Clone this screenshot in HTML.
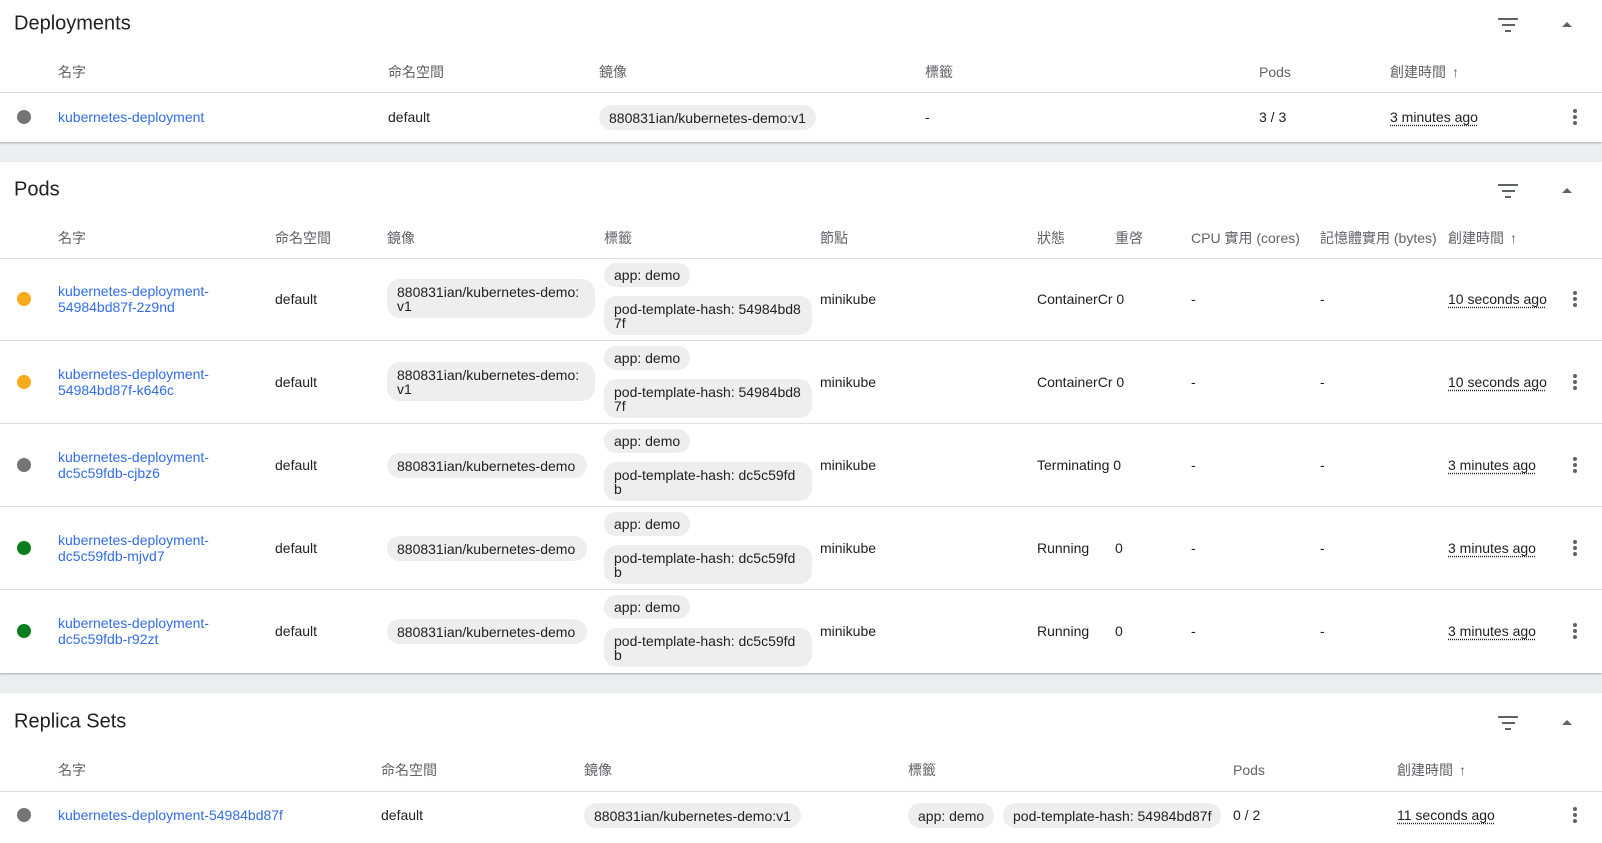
<!DOCTYPE html>
<html><head><meta charset="utf-8"><style>
*{box-sizing:border-box;margin:0;padding:0}
body{width:1602px;height:835px;overflow:hidden;background:#eceff1;font-family:"Liberation Sans","Noto Sans CJK TC",sans-serif;font-size:14px;color:#202124;position:relative}
.card{position:absolute;left:0;width:1602px;background:#fff;box-shadow:0 1px 2px rgba(0,0,0,.3)}
.a{position:absolute;white-space:nowrap}
.t{font-size:20px;left:14px}
.h{color:#5f6368;transform:translateY(-50%)}
.c{transform:translateY(-50%)}
.ln{position:absolute;left:0;width:1602px;height:1px;background:#e0e0e0}
.lk{color:#326de6;line-height:16px}
.chip{position:absolute;background:#eeeeee;border-radius:13px;padding:0 10px;line-height:14px;display:flex;align-items:center;white-space:normal;word-break:break-all}
.dot{position:absolute;left:17px;width:14px;height:14px;border-radius:50%;transform:translateY(-50%)}
.g{background:#757575}.o{background:#f9ab1f}.gr{background:#0a7e1e}
.tm{text-decoration:underline dotted;text-underline-offset:3px}
.keb{position:absolute;left:1573px;width:4px;transform:translateY(-50%)}
.keb i{display:block;width:4px;height:4px;border-radius:50%;background:#5f6368;margin:2px 0}
.flt{position:absolute;left:1498px}
.flt i{display:block;height:2px;background:#5f6368;margin:0 auto 4px}
.car{position:absolute;left:1562px;width:0;height:0;border-left:5px solid transparent;border-right:5px solid transparent;border-bottom:5px solid #5f6368}
.arr{font-size:14px;margin-left:6px;color:#5f6368;font-weight:bold}
</style></head><body>

<!-- Deployments -->
<div class="card" style="top:0;height:142px">
<div class="a t c" style="top:24px">Deployments</div>
<div class="flt" style="top:18px;width:20px"><i style="width:20px"></i><i style="width:13px"></i><i style="width:6px"></i></div>
<div class="car" style="top:22px"></div>
<div class="a h" style="left:58px;top:72px">名字</div>
<div class="a h" style="left:388px;top:72px">命名空間</div>
<div class="a h" style="left:599px;top:72px">鏡像</div>
<div class="a h" style="left:925px;top:72px">標籤</div>
<div class="a h" style="left:1259px;top:72px">Pods</div>
<div class="a h" style="left:1390px;top:72px">創建時間<span class="arr">↑</span></div>
<div class="ln" style="top:92px"></div>
<div class="dot g" style="top:117px"></div>
<div class="a c lk" style="left:58px;top:117px">kubernetes-deployment</div>
<div class="a c" style="left:388px;top:117px">default</div>
<div class="chip" style="left:599px;top:105px;height:25px">880831ian/kubernetes-demo:v1</div>
<div class="a c" style="left:925px;top:117px">-</div>
<div class="a c" style="left:1259px;top:117px">3 / 3</div>
<div class="a c tm" style="left:1390px;top:117px">3 minutes ago</div>
<div class="keb" style="top:117px"><i></i><i></i><i></i></div>
</div>

<!-- Pods -->
<div class="card" style="top:162px;height:511px">
<div class="a t c" style="top:28px">Pods</div>
<div class="flt" style="top:22px;width:20px"><i style="width:20px"></i><i style="width:13px"></i><i style="width:6px"></i></div>
<div class="car" style="top:26px"></div>
<div class="a h" style="left:58px;top:76px">名字</div>
<div class="a h" style="left:275px;top:76px">命名空間</div>
<div class="a h" style="left:387px;top:76px">鏡像</div>
<div class="a h" style="left:604px;top:76px">標籤</div>
<div class="a h" style="left:820px;top:76px">節點</div>
<div class="a h" style="left:1037px;top:76px">狀態</div>
<div class="a h" style="left:1115px;top:76px">重啓</div>
<div class="a h" style="left:1191px;top:76px">CPU 實用 (cores)</div>
<div class="a h" style="left:1320px;top:76px">記憶體實用 (bytes)</div>
<div class="a h" style="left:1448px;top:76px">創建時間<span class="arr">↑</span></div>
<div class="ln" style="top:96px"></div>

<!-- row template: top offsets 96,179,262,345,428 -->
<div style="position:absolute;left:0;top:96px;width:1602px;height:83px">
<div class="dot o" style="top:41px"></div>
<div class="a c lk" style="left:58px;top:41px">kubernetes-deployment-<br>54984bd87f-2z9nd</div>
<div class="a c" style="left:275px;top:41px">default</div>
<div class="chip" style="left:387px;top:21px;height:39px;width:208px">880831ian/kubernetes-demo:<br>v1</div>
<div class="chip" style="left:604px;top:5px;height:24px">app: demo</div>
<div class="chip" style="left:604px;top:38px;height:39px;width:208px">pod-template-hash: 54984bd8<br>7f</div>
<div class="a c" style="left:820px;top:41px">minikube</div>
<div class="a c" style="left:1037px;top:41px">ContainerCr 0</div>
<div class="a c" style="left:1191px;top:41px">-</div>
<div class="a c" style="left:1320px;top:41px">-</div>
<div class="a c tm" style="left:1448px;top:41px">10 seconds ago</div>
<div class="keb" style="top:41px"><i></i><i></i><i></i></div>
<div class="ln" style="top:82px"></div>
</div>

<div style="position:absolute;left:0;top:179px;width:1602px;height:83px">
<div class="dot o" style="top:41px"></div>
<div class="a c lk" style="left:58px;top:41px">kubernetes-deployment-<br>54984bd87f-k646c</div>
<div class="a c" style="left:275px;top:41px">default</div>
<div class="chip" style="left:387px;top:21px;height:39px;width:208px">880831ian/kubernetes-demo:<br>v1</div>
<div class="chip" style="left:604px;top:5px;height:24px">app: demo</div>
<div class="chip" style="left:604px;top:38px;height:39px;width:208px">pod-template-hash: 54984bd8<br>7f</div>
<div class="a c" style="left:820px;top:41px">minikube</div>
<div class="a c" style="left:1037px;top:41px">ContainerCr 0</div>
<div class="a c" style="left:1191px;top:41px">-</div>
<div class="a c" style="left:1320px;top:41px">-</div>
<div class="a c tm" style="left:1448px;top:41px">10 seconds ago</div>
<div class="keb" style="top:41px"><i></i><i></i><i></i></div>
<div class="ln" style="top:82px"></div>
</div>

<div style="position:absolute;left:0;top:262px;width:1602px;height:83px">
<div class="dot g" style="top:41px"></div>
<div class="a c lk" style="left:58px;top:41px">kubernetes-deployment-<br>dc5c59fdb-cjbz6</div>
<div class="a c" style="left:275px;top:41px">default</div>
<div class="chip" style="left:387px;top:29px;height:25px;width:200px">880831ian/kubernetes-demo</div>
<div class="chip" style="left:604px;top:5px;height:24px">app: demo</div>
<div class="chip" style="left:604px;top:38px;height:39px;width:208px">pod-template-hash: dc5c59fd<br>b</div>
<div class="a c" style="left:820px;top:41px">minikube</div>
<div class="a c" style="left:1037px;top:41px">Terminating 0</div>
<div class="a c" style="left:1191px;top:41px">-</div>
<div class="a c" style="left:1320px;top:41px">-</div>
<div class="a c tm" style="left:1448px;top:41px">3 minutes ago</div>
<div class="keb" style="top:41px"><i></i><i></i><i></i></div>
<div class="ln" style="top:82px"></div>
</div>

<div style="position:absolute;left:0;top:345px;width:1602px;height:83px">
<div class="dot gr" style="top:41px"></div>
<div class="a c lk" style="left:58px;top:41px">kubernetes-deployment-<br>dc5c59fdb-mjvd7</div>
<div class="a c" style="left:275px;top:41px">default</div>
<div class="chip" style="left:387px;top:29px;height:25px;width:200px">880831ian/kubernetes-demo</div>
<div class="chip" style="left:604px;top:5px;height:24px">app: demo</div>
<div class="chip" style="left:604px;top:38px;height:39px;width:208px">pod-template-hash: dc5c59fd<br>b</div>
<div class="a c" style="left:820px;top:41px">minikube</div>
<div class="a c" style="left:1037px;top:41px">Running</div>
<div class="a c" style="left:1115px;top:41px">0</div>
<div class="a c" style="left:1191px;top:41px">-</div>
<div class="a c" style="left:1320px;top:41px">-</div>
<div class="a c tm" style="left:1448px;top:41px">3 minutes ago</div>
<div class="keb" style="top:41px"><i></i><i></i><i></i></div>
<div class="ln" style="top:82px"></div>
</div>

<div style="position:absolute;left:0;top:428px;width:1602px;height:83px">
<div class="dot gr" style="top:41px"></div>
<div class="a c lk" style="left:58px;top:41px">kubernetes-deployment-<br>dc5c59fdb-r92zt</div>
<div class="a c" style="left:275px;top:41px">default</div>
<div class="chip" style="left:387px;top:29px;height:25px;width:200px">880831ian/kubernetes-demo</div>
<div class="chip" style="left:604px;top:5px;height:24px">app: demo</div>
<div class="chip" style="left:604px;top:38px;height:39px;width:208px">pod-template-hash: dc5c59fd<br>b</div>
<div class="a c" style="left:820px;top:41px">minikube</div>
<div class="a c" style="left:1037px;top:41px">Running</div>
<div class="a c" style="left:1115px;top:41px">0</div>
<div class="a c" style="left:1191px;top:41px">-</div>
<div class="a c" style="left:1320px;top:41px">-</div>
<div class="a c tm" style="left:1448px;top:41px">3 minutes ago</div>
<div class="keb" style="top:41px"><i></i><i></i><i></i></div>
</div>
</div>

<!-- Replica Sets -->
<div class="card" style="top:693px;height:150px">
<div class="a t c" style="top:29px">Replica Sets</div>
<div class="flt" style="top:23px;width:20px"><i style="width:20px"></i><i style="width:13px"></i><i style="width:6px"></i></div>
<div class="car" style="top:27px"></div>
<div class="a h" style="left:58px;top:77px">名字</div>
<div class="a h" style="left:381px;top:77px">命名空間</div>
<div class="a h" style="left:584px;top:77px">鏡像</div>
<div class="a h" style="left:908px;top:77px">標籤</div>
<div class="a h" style="left:1233px;top:77px">Pods</div>
<div class="a h" style="left:1397px;top:77px">創建時間<span class="arr">↑</span></div>
<div class="ln" style="top:98px"></div>
<div class="dot g" style="top:122px"></div>
<div class="a c lk" style="left:58px;top:122px">kubernetes-deployment-54984bd87f</div>
<div class="a c" style="left:381px;top:122px">default</div>
<div class="chip" style="left:584px;top:110px;height:25px">880831ian/kubernetes-demo:v1</div>
<div class="chip" style="left:908px;top:110px;height:25px">app: demo</div>
<div class="chip" style="left:1003px;top:110px;height:25px;white-space:nowrap">pod-template-hash: 54984bd87f</div>
<div class="a c" style="left:1233px;top:122px">0 / 2</div>
<div class="a c tm" style="left:1397px;top:122px">11 seconds ago</div>
<div class="keb" style="top:122px"><i></i><i></i><i></i></div>
</div>
</body></html>
